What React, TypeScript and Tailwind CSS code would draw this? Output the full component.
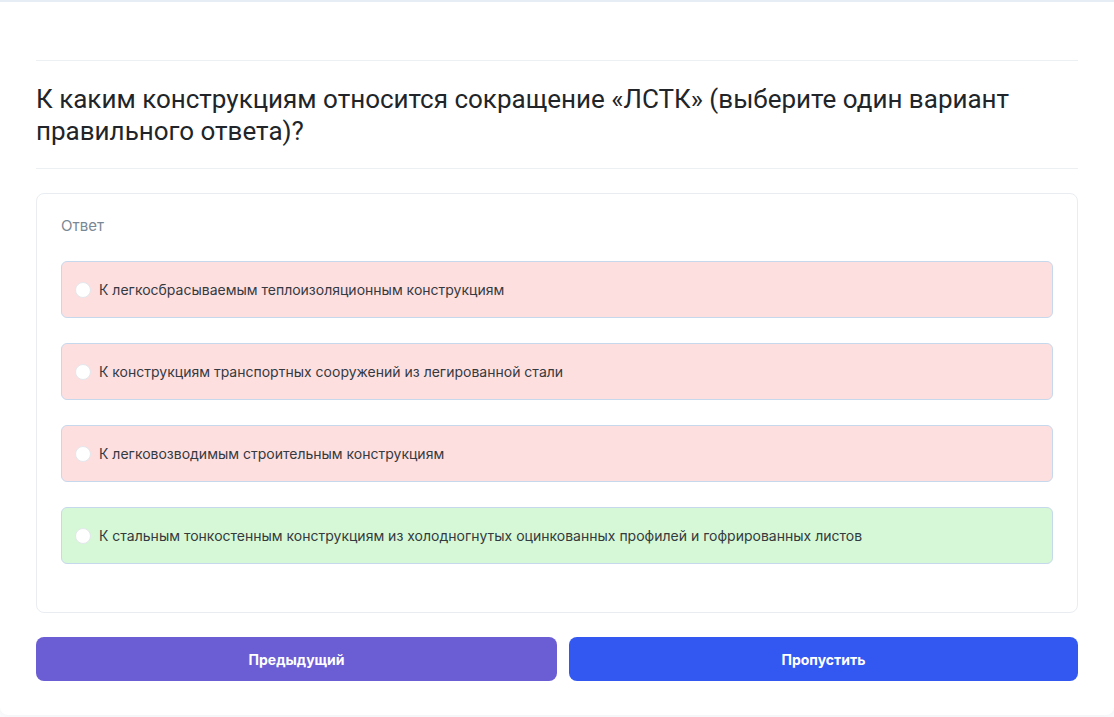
import React from "react";

const options = [
  { text: "К легкосбрасываемым теплоизоляционным конструкциям", correct: false },
  { text: "К конструкциям транспортных сооружений из легированной стали", correct: false },
  { text: "К легковозводимым строительным конструкциям", correct: false },
  {
    text: "К стальным тонкостенным конструкциям из холодногнутых оцинкованных профилей и гофрированных листов",
    correct: true,
  },
];

const App = () => {
  return (
    <div className="min-h-screen bg-[#fbfcfd] font-['Inter','Noto_Sans',sans-serif]">
      <div className="h-[715px] rounded-b-lg border-t-[2px] border-[#e6edf5] bg-white px-9 pt-[58px] shadow-[0_2px_10px_rgba(15,23,42,0.04)]">
        <hr className="border-t border-[#edf0f3]" />
        <h2 className="pt-[22px] pb-[21px] font-['Roboto',sans-serif] text-[26px] leading-[32px] text-[#212529]">
          К каким конструкциям относится сокращение «ЛСТК» (выберите один вариант правильного ответа)?
        </h2>
        <hr className="border-t border-[#edf0f3]" />

        <div className="mt-6 rounded-lg border border-[#e9edf2] bg-white px-6 pt-[22px] pb-12">
          <div className="text-[15px] leading-5 text-[#7a8794]">Ответ</div>
          <div className="mt-[25px] flex flex-col gap-[25px]">
            {options.map((o) => (
              <label
                key={o.text}
                className={`flex h-[57px] items-center gap-2 rounded-md border border-[#c6d8ec] pl-[13px] pr-[14px] ${
                  o.correct ? "bg-[#d6f8d6]" : "bg-[#fedfe0]"
                }`}
              >
                <span className="h-[16px] w-[16px] shrink-0 rounded-full border border-[#e3e7ec] bg-white" />
                <span className="text-[14px] text-[#343a40]">{o.text}</span>
              </label>
            ))}
          </div>
        </div>

        <div className="mt-6 flex gap-3">
          <button className="h-11 w-[521px] rounded-lg bg-[#6b5dd3] text-[14px] font-bold text-white">
            Предыдущий
          </button>
          <button className="h-11 flex-1 rounded-lg bg-[#3358f1] text-[14px] font-bold text-white">
            Пропустить
          </button>
        </div>
      </div>
    </div>
  );
};

export default App;
